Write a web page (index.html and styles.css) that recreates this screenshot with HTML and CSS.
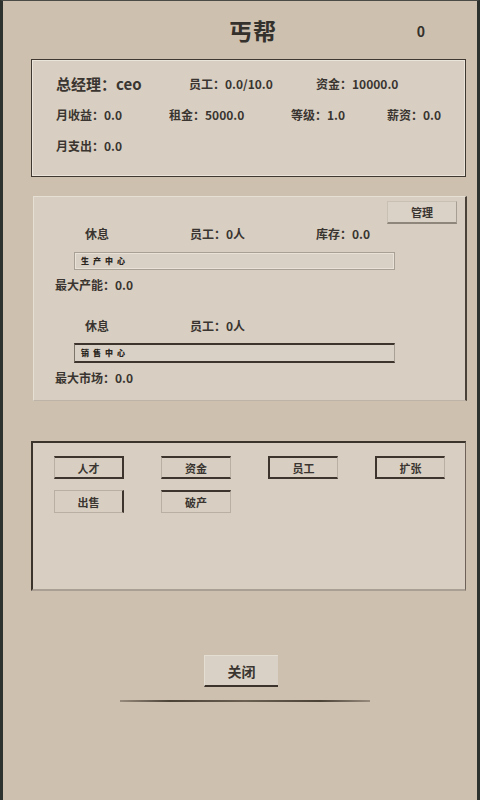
FILE: index.html
```html
<!DOCTYPE html>
<html lang="zh">
<head>
<meta charset="utf-8">
<link rel="stylesheet" href="styles.css">
</head>
<body>
<div class="page">
  <header class="header">
    <div class="title">丐帮</div>
    <div class="count">0</div>
  </header>

  <section class="panel info">
    <div class="row">
      <span class="big w1">总经理：ceo</span>
      <span class="w2">员工：0.0/10.0</span>
      <span>资金：10000.0</span>
    </div>
    <div class="row">
      <span class="w3">月收益：0.0</span>
      <span class="w4">租金：5000.0</span>
      <span class="w5">等级：1.0</span>
      <span>薪资：0.0</span>
    </div>
    <div class="row">
      <span>月支出：0.0</span>
    </div>
  </section>

  <section class="panel factory">
    <div class="toprow"><button class="btn manage">管理</button></div>
    <div class="status first">
      <span class="s1">休息</span>
      <span class="s2">员工：0人</span>
      <span>库存：0.0</span>
    </div>
    <div class="bar light"><span class="marks">生产中心</span></div>
    <div class="cap">最大产能：0.0</div>

    <div class="status second">
      <span class="s1">休息</span>
      <span class="s2">员工：0人</span>
    </div>
    <div class="bar dark"><span class="marks">销售中心</span></div>
    <div class="cap">最大市场：0.0</div>
  </section>

  <section class="panel actions">
    <div class="grid">
      <button class="btn act b1">人才</button>
      <button class="btn act b2">资金</button>
      <button class="btn act b3">员工</button>
      <button class="btn act b4">扩张</button>
      <button class="btn act b5">出售</button>
      <button class="btn act b6">破产</button>
    </div>
  </section>

  <div class="footer">
    <button class="btn close">关闭</button>
    <div class="rule"></div>
  </div>
</div>
</body>
</html>
```

FILE: styles.css
```css
html, body {
  margin: 0;
  padding: 0;
}
body {
  font-family: "Noto Sans CJK SC", "Noto Sans", sans-serif;
  color: #3a3530;
  background: #cdc0af;
}
.page {
  width: 480px;
  height: 800px;
  box-sizing: border-box;
  background: #cdc0af;
  border-left: 3px solid #2e322f;
  border-right: 3px solid #2e322f;
  border-top: 1px solid #4a4a46;
  display: flex;
  flex-direction: column;
}
.header {
  height: 58px;
  display: flex;
  align-items: center;
}
.title {
  margin-left: 226px;
  font-size: 23px;
  font-weight: bold;
  color: #34302c;
  letter-spacing: 1px;
}
.count {
  margin-left: auto;
  margin-right: 52px;
  font-size: 14px;
  font-weight: bold;
  color: #34302c;
  padding-top: 2px;
}
.panel {
  background: #d8cfc2;
  box-sizing: border-box;
}
.info {
  margin-left: 28px;
  width: 435px;
  height: 118px;
  border: 1px solid #3e3831;
  box-shadow: inset 0 0 0 1px #eae4da;
  padding: 8px 0 0 24px;
}
.row {
  display: flex;
  align-items: center;
  height: 31px;
  font-size: 12px;
  font-weight: bold;
  white-space: nowrap;
}
.row .big {
  font-size: 15px;
}
.w1 { width: 133px; }
.w2 { width: 127px; }
.w3 { width: 113px; }
.w4 { width: 122px; }
.w5 { width: 96px; }

.factory {
  margin-top: 19px;
  margin-left: 30px;
  width: 434px;
  height: 205px;
  border-top: 1px solid #e6dfd4;
  border-left: 1px solid #e6dfd4;
  border-bottom: 1px solid #bdb3a6;
  border-right: 2px solid #4a4139;
  padding: 4px 8px 0 0;
  font-size: 12px;
  font-weight: bold;
}
.toprow {
  display: flex;
  justify-content: flex-end;
}
.btn {
  font-family: "Noto Sans CJK SC", "Noto Sans", sans-serif;
  font-weight: bold;
  color: #3a3530;
  background: #d8cfc2;
  padding: 0;
  margin: 0;
  box-sizing: border-box;
  cursor: pointer;
}
.manage {
  width: 70px;
  height: 23px;
  font-size: 11px;
  border: 1px solid #a79e93;
  border-top-color: #c9c0b4;
  border-left-color: #c9c0b4;
  border-bottom: 2px solid #8f867b;
  background: #dad2c6;
}
.status {
  display: flex;
  align-items: center;
  height: 18px;
  padding-left: 51px;
}
.status.first { margin-top: 0; }
.status.second { margin-top: 24px; }
.status .s1 { width: 105px; }
.status .s2 { width: 126px; }
.bar {
  margin-left: 40px;
  width: 321px;
  box-sizing: border-box;
  display: flex;
  align-items: center;
  padding-left: 6px;
  background: #d9d1c5;
}
.bar.light {
  margin-top: 10px;
  height: 18px;
  border: 1px solid #a9a095;
  box-shadow: inset 0 0 0 1px #e9e2d8;
}
.bar.dark {
  margin-top: 9px;
  height: 20px;
  border-top: 2px solid #3c342d;
  border-bottom: 2px solid #3c342d;
  border-left: 1px solid #7d7469;
  border-right: 1px solid #a9a095;
}
.marks {
  font-size: 8px;
  letter-spacing: 4px;
  line-height: 1;
  font-weight: 900;
  color: #2a2520;
}
.cap {
  margin-left: 21px;
  height: 16px;
  display: flex;
  align-items: center;
  margin-top: 6px;
}

.actions {
  margin-top: 40px;
  margin-left: 28px;
  width: 435px;
  height: 150px;
  border-top: 2px solid #3b342d;
  border-left: 2px solid #3b342d;
  border-right: 1px solid #6c6258;
  border-bottom: 2px solid #a99f92;
  padding: 13px 0 0 21px;
}
.grid {
  display: grid;
  grid-template-columns: repeat(4, 70px);
  column-gap: 37px;
  row-gap: 11px;
}
.act {
  height: 23px;
  font-size: 11px;
  background: #d8cfc2;
  border: 1px solid #b9afa3;
}
.b1 {
  border-top: 2px solid #3c342d;
  border-right: 2px solid #3c342d;
  border-bottom: 2px solid #3c342d;
}
.b2 {
  border-top: 2px solid #3c342d;
  border-bottom: 2px solid #3c342d;
}
.b3 {
  border-top: 2px solid #3c342d;
  border-left: 2px solid #3c342d;
  border-bottom: 2px solid #3c342d;
}
.b4 {
  border-top: 2px solid #3c342d;
  border-left: 2px solid #3c342d;
  border-bottom: 2px solid #3c342d;
}
.b5 {
  border-right: 2px solid #3c342d;
}
.b6 {
  border-top: 2px solid #3c342d;
}

.footer {
  margin-top: 64px;
  display: flex;
  flex-direction: column;
  align-items: center;
}
.close {
  margin-left: 2px;
  width: 74px;
  height: 32px;
  font-size: 14px;
  background: #d9d1c5;
  border: none;
  border-top: 1px solid #e4ddd2;
  border-left: 1px solid #e4ddd2;
  border-bottom: 2px solid #3b332c;
}
.rule {
  margin-top: 13px;
  margin-left: 10px;
  width: 250px;
  height: 2px;
  background: linear-gradient(to right, rgba(70,60,50,0.4), #4b4236 20%, #6a5f51 50%, #4b4236 80%, rgba(70,60,50,0.4));
}
```
